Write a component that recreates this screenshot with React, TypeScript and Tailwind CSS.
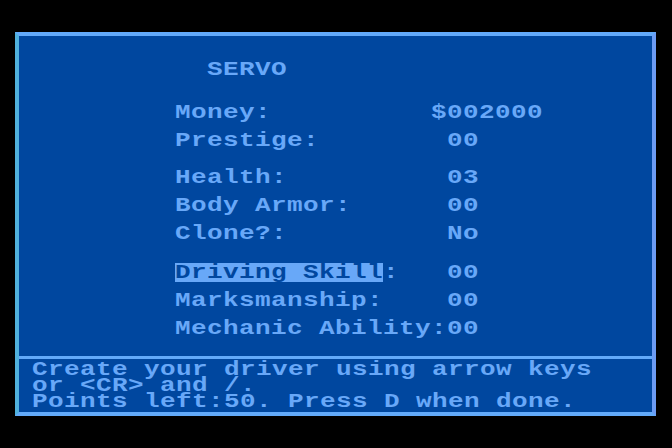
import React from "react";

const mono = { fontFamily: '"Liberation Mono", "DejaVu Sans Mono", monospace' };

// Wide, blocky 40-column text: glyphs stretched horizontally so each cell is 16px.
const wide = "w-fit origin-left scale-x-[1.3] tracking-[0.306px] whitespace-pre";

function Row({ text }: { text: string }) {
  return <div className={`h-[28px] leading-[28px] ${wide}`}>{text}</div>;
}

function Line({ text }: { text: string }) {
  return <div className={`h-[16px] leading-[16px] ${wide}`}>{text}</div>;
}

export default function App() {
  return (
    <div className="w-[672px] h-[448px] overflow-hidden bg-black pt-[32px] pl-[15px]" style={mono}>
      <div className="w-[641px] h-[384px] flex flex-col bg-[#00479f] border-t-[4px] border-l-[4px] border-r-[4px] border-b-[4px] border-t-[#62aafa] border-b-[#62aafa] border-l-[#4fb0dc] border-r-[#6c9cf4] text-[20px] font-bold text-[#68a8f8]">
        {/* character sheet */}
        <div className="h-[320px] pl-[156px] pt-[20px]">
          <Row text="  SERVO" />
          <div className="mt-[15px]">
            <Row text="Money:          $002000" />
            <Row text="Prestige:        00" />
          </div>
          <div className="mt-[9px]">
            <Row text="Health:          03" />
            <Row text="Body Armor:      00" />
            <Row text="Clone?:          No" />
          </div>
          <div className="mt-[11px]">
            <div className={`h-[28px] flex items-start ${wide}`}>
              <span className="mt-[4px] h-[19px] leading-[19px] bg-[#68a8f8] text-[#00479f]">
                Driving Skill
              </span>
              <span className="leading-[28px]">{":   00"}</span>
            </div>
            <Row text="Marksmanship:    00" />
            <Row text="Mechanic Ability:00" />
          </div>
        </div>
        {/* divider */}
        <div className="h-[3px] bg-[#62aafa]" />
        {/* prompt area */}
        <div className="flex-1 pl-[13px] pt-[3px]">
          <Line text="Create your driver using arrow keys" />
          <Line text="or <CR> and /." />
          <Line text="Points left:50. Press D when done." />
        </div>
      </div>
    </div>
  );
}
